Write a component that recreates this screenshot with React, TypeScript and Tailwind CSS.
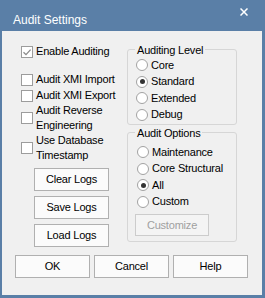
import React from 'react';

const font = "font-['Liberation_Sans',Arial,sans-serif]";

function CheckBox({ checked }: { checked?: boolean }) {
  return (
    <span className="w-[12px] h-[12px] shrink-0 border border-[#9c9c9c] bg-white flex items-center justify-center">
      {checked && (
        <svg width="10" height="10" viewBox="0 0 10 10">
          <path d="M1.5 5.2 L4 7.6 L8.6 2.6" stroke="#8a8a8a" strokeWidth="1.3" fill="none" />
        </svg>
      )}
    </span>
  );
}

function Radio({ on }: { on?: boolean }) {
  return (
    <span className="w-[12px] h-[12px] shrink-0 rounded-full border border-[#a2a2a2] bg-white flex items-center justify-center">
      {on && <span className="w-[5px] h-[5px] rounded-full bg-[#333333]" />}
    </span>
  );
}

function CheckRow({ label, checked, className }: { label: React.ReactNode; checked?: boolean; className: string }) {
  return (
    <div className={`flex items-center gap-[3px] ${className}`}>
      <CheckBox checked={checked} />
      <span className="leading-[15px]">{label}</span>
    </div>
  );
}

function RadioRow({ label, on }: { label: string; on?: boolean }) {
  return (
    <div className="flex items-center gap-[3px] h-[16.5px]">
      <Radio on={on} />
      <span className="leading-[15px]">{label}</span>
    </div>
  );
}

function Btn({ label, className = '' }: { label: string; className?: string }) {
  return (
    <div
      className={`w-[75px] h-[23px] border border-[#b0b0b0] bg-[#fbfbfb] flex items-center justify-center leading-none ${className}`}
    >
      {label}
    </div>
  );
}

export default function App() {
  return (
    <div className={`w-[265px] h-[298px] bg-[#5a7fa7] flex flex-col ${font}`}>
      <div className="h-[31px] flex items-start shrink-0">
        <span className="mt-[13px] ml-[13px] text-white text-[12px] leading-[14px]">Audit Settings</span>
        <svg className="ml-auto mt-[8px] mr-[17px]" width="8" height="8" viewBox="0 0 8 8">
          <path d="M0.5 0.5 L7.5 7.5 M7.5 0.5 L0.5 7.5" stroke="#ffffff" strokeWidth="1.5" />
        </svg>
      </div>

      <div className="flex-1 ml-[2px] mr-[3px] mb-[3px] bg-[#f0f0f0] text-[11px] tracking-[-0.2px] text-black flex flex-col">
        <div className="flex">
          <div className="w-[125px] pl-[19px] pt-[13px] flex flex-col">
            <CheckRow checked label="Enable Auditing" className="h-[15px]" />
            <CheckRow label="Audit XMI Import" className="h-[15px] mt-[13px]" />
            <CheckRow label="Audit XMI Export" className="h-[15px] mt-[1px]" />
            <CheckRow
              label={
                <>
                  Audit Reverse
                  <br />
                  Engineering
                </>
              }
              className="h-[30px]"
            />
            <CheckRow
              label={
                <>
                  Use Database
                  <br />
                  Timestamp
                </>
              }
              className="h-[30px]"
            />
            <Btn label="Clear Logs" className="ml-[13px] mt-[5px]" />
            <Btn label="Save Logs" className="ml-[13px] mt-[5px]" />
            <Btn label="Load Logs" className="ml-[13px] mt-[5px]" />
          </div>

          <div className="w-[110px] pt-[18px] flex flex-col">
            <div className="relative h-[76px] border border-[#d6d6d6] rounded-[3px] pl-[8px] pt-[7px]">
              <span className="absolute left-[7px] -top-[7.5px] px-[2px] bg-[#f0f0f0] leading-[15px]">
                Auditing Level
              </span>
              <RadioRow label="Core" />
              <RadioRow label="Standard" on />
              <RadioRow label="Extended" />
              <RadioRow label="Debug" />
            </div>

            <div className="relative h-[110px] mt-[7px] border border-[#d6d6d6] rounded-[3px] pl-[9px] pt-[11px]">
              <span className="absolute left-[7px] -top-[7.5px] px-[2px] bg-[#f0f0f0] leading-[15px]">
                Audit Options
              </span>
              <RadioRow label="Maintenance" />
              <RadioRow label="Core Structural" />
              <RadioRow label="All" on />
              <RadioRow label="Custom" />
              <div className="w-[74px] h-[22px] mt-[4px] -ml-[2px] border border-[#cccccc] bg-[#f4f4f4] text-[#a0a0a0] flex items-center justify-center leading-none">
                Customize
              </div>
            </div>
          </div>
        </div>

        <div className="flex gap-[4px] pl-[13px] mt-[8px]">
          <Btn label="OK" className="border-[#3d5f84]" />
          <Btn label="Cancel" />
          <Btn label="Help" />
        </div>
      </div>
    </div>
  );
}
